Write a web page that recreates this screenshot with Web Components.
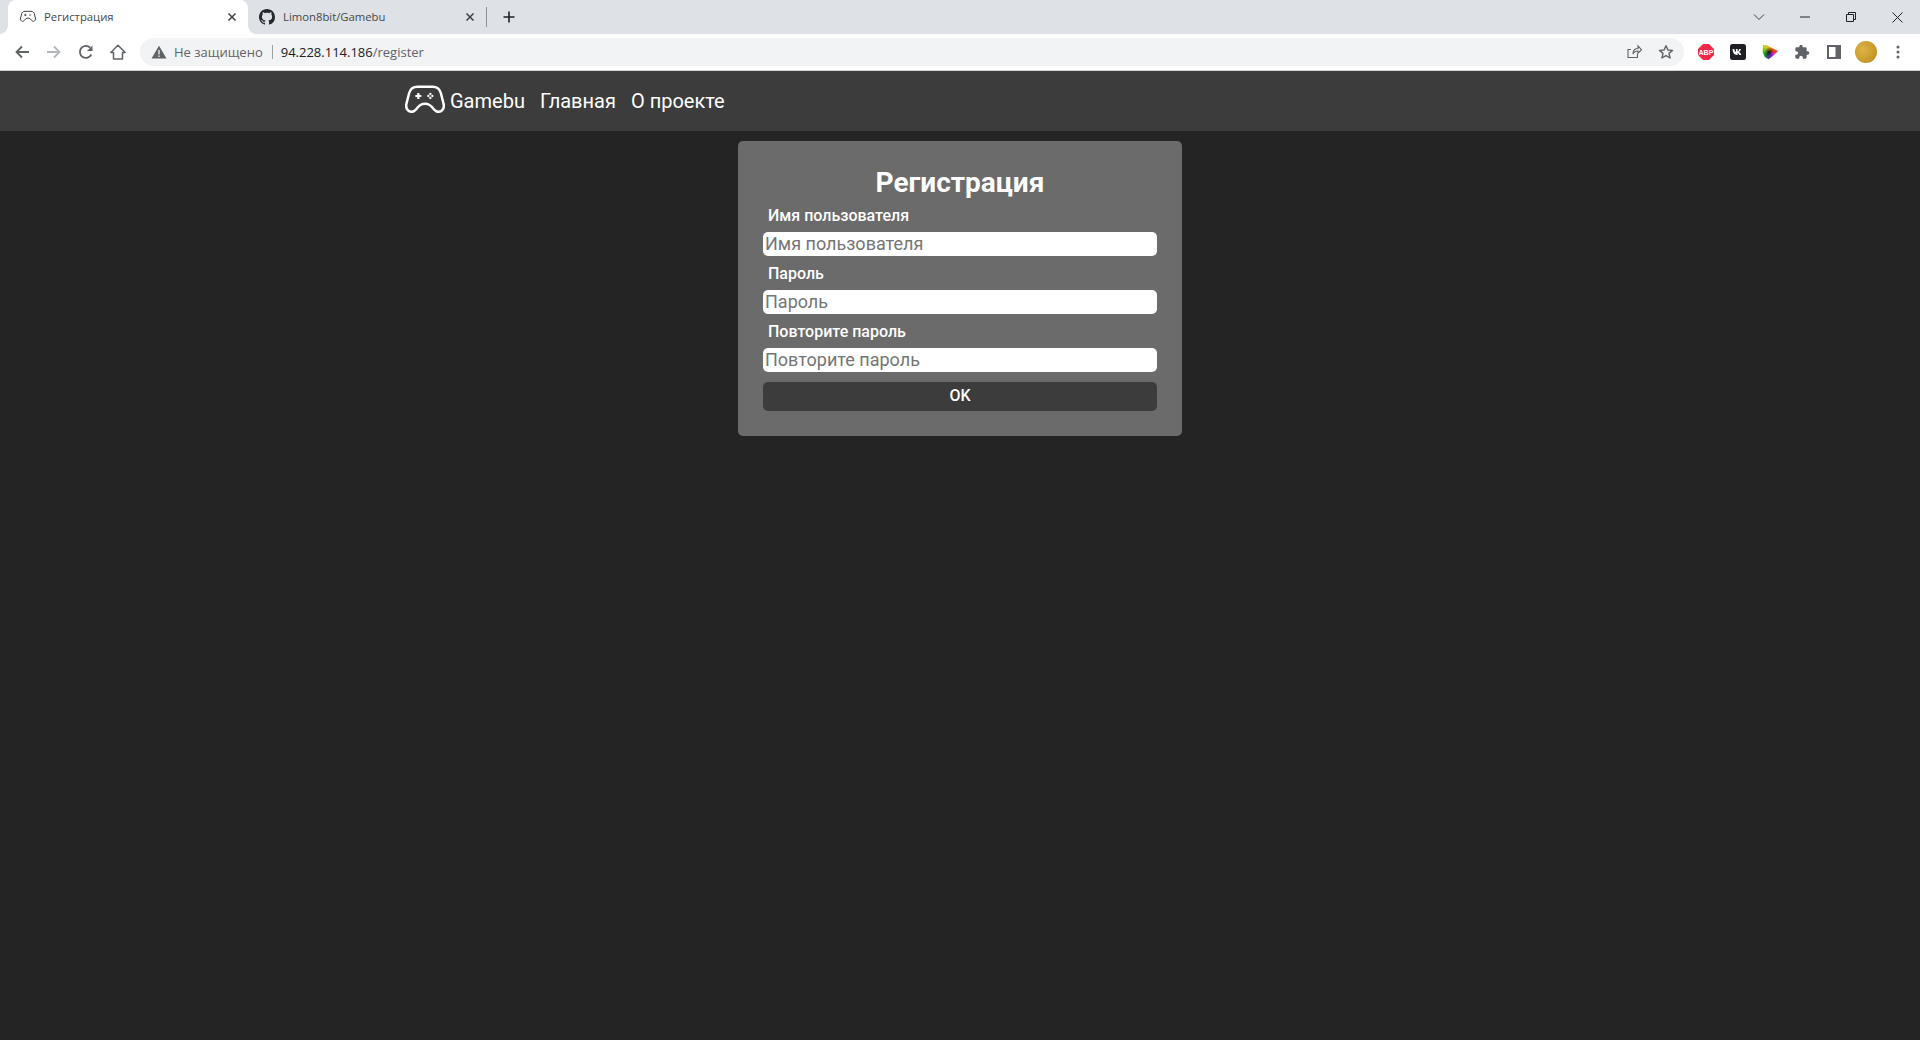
<!DOCTYPE html>
<html lang="ru">
<head>
<meta charset="utf-8">
<title>Регистрация</title>
<style>
    html, body { margin: 0; height: 100%; background: #242424; }
    body { display: flex; flex-direction: column; height: 1040px; overflow: hidden; font-family: Roboto, "Liberation Sans", sans-serif; }
</style>
</head>
<body>
<browser-bar></browser-bar>
<site-nav>
    <a href="#">Главная</a>
    <a href="#">О проекте</a>
</site-nav>
<register-page>
    <form-field label="Имя пользователя"></form-field>
    <form-field label="Пароль" type="password"></form-field>
    <form-field label="Повторите пароль" type="password"></form-field>
</register-page>

<script>
const GAMEPAD = `<path d="M7.500 3.500h9c2.600 0 4.300 1.300 5 3.700l1.600 6.300c.7 2.800-.8 5-2.900 5-1.400 0-2.300-.8-3.200-1.900C15.800 14.800 14.200 13.600 12 13.600S8.200 14.800 7 16.600c-.9 1.100-1.800 1.900-3.200 1.900-2.100 0-3.600-2.200-2.900-5l1.600-6.300c.7-2.400 2.400-3.700 5-3.700z" fill="none" stroke="currentColor" stroke-width="1.500" stroke-linejoin="round"/>
    <path d="M8 7.200v3.600M6.200 9h3.600" fill="none" stroke="currentColor" stroke-width="1.300"/>
    <circle cx="15.200" cy="7.800" r=".7" fill="currentColor"/><circle cx="15.200" cy="10.200" r=".7" fill="currentColor"/>
    <circle cx="14" cy="9" r=".7" fill="currentColor"/><circle cx="16.400" cy="9" r=".7" fill="currentColor"/>`;

class BrowserBar extends HTMLElement {
    constructor() {
        super();
        this.root = this.attachShadow({ mode: "open" });
        this.root.innerHTML = `
            <style>
                :host { display: block; font-family: "Open Sans", "Noto Sans", sans-serif; color: #3c4043; }
                .tabs { height: 34px; background: #dee1e6; display: flex; align-items: flex-end; padding-left: 8px; }
                .tab { width: 240px; height: 34px; box-sizing: border-box; display: flex; align-items: center; padding: 0 8px 0 12px; gap: 8px; font-size: 11.300px; white-space: nowrap; color: #45494c; }
                .tab.active { background: white; border-radius: 8px 8px 0 0; position: relative; }
                .tab.active::before, .tab.active::after { content: ""; position: absolute; bottom: 0; width: 8px; height: 8px; }
                .tab.active::before { left: -8px; background: radial-gradient(circle at 0 0, #dee1e6 7.500px, white 8px); }
                .tab.active::after { right: -8px; background: radial-gradient(circle at 100% 0, #dee1e6 7.500px, white 8px); }
                .tab.other { width: 238px; padding-left: 11px; gap: 8px; }
                .tab .name { flex: 1; padding-bottom: 1px; }
                .tab svg { flex: none; }
                .sep { width: 1px; height: 20px; background: #8f9296; margin: 0 0 7px 0; }
                .plus { width: 44px; height: 34px; display: flex; align-items: center; justify-content: center; }
                .spacer { flex: 1; }
                .win { height: 34px; width: 46px; display: flex; align-items: center; justify-content: center; margin-top: -5px; }
                .winctl { display: flex; align-self: flex-start; padding-top: 5px; }
                .tools { height: 37px; box-sizing: border-box; border-bottom: 1px solid #cfd1d4; background: white; display: flex; align-items: center; padding: 0 6px; }
                .btn { width: 32px; height: 36px; display: flex; align-items: center; justify-content: center; flex: none; }
                .omni { flex: 1; height: 28px; margin: 0 6px; background: #f1f3f4; border-radius: 14px; display: flex; align-items: center; padding: 0 2px 0 11px; font-size: 13px; white-space: nowrap; }
                .warn { color: #5f6368; margin: 0 0 0 7px; }
                .bar { width: 1px; height: 14px; background: #9aa0a6; margin: 0 8px 0 9px; }
                .host { color: #202124; }
                .path { color: #5f6368; }
                .omni .grow { flex: 1; }
                .omni .act { width: 32px; display: flex; justify-content: center; }
                .avatar { width: 22px; height: 22px; border-radius: 50%; background: radial-gradient(circle at 35% 40%, #dcb445, #cb9c2e 55%, #b98a22 90%); }
                .wheel { width: 16px; height: 16px; clip-path: polygon(6% 6%, 30% 8%, 100% 44%, 72% 72%, 40% 96%, 18% 82%, 4% 50%); background: radial-gradient(circle at 45% 48%, rgba(20,0,0,.85), rgba(20,0,0,0) 38%), conic-gradient(at 45% 48%, #f0b020, #f03a10 25%, #e030e0 32%, #6a20d0 45%, #0c7a2c 62%, #60c820 78%, #c8d020 90%, #f0b020); }
            </style>
            <div class="tabs">
                <div class="tab active">
                    <svg width="16" height="16" viewBox="0 0 24 24" style="color:#3c4043">${GAMEPAD}</svg>
                    <span class="name">Регистрация</span>
                    <svg width="16" height="16" viewBox="0 0 16 16"><path d="M4.500 4.500l7 7M11.500 4.500l-7 7" stroke="#3c4043" stroke-width="1.500"/></svg>
                </div>
                <div class="tab other">
                    <svg width="16" height="16" viewBox="0 0 16 16"><path fill="#24292e" d="M8 0C3.580 0 0 3.580 0 8c0 3.540 2.290 6.530 5.470 7.590.4.070.55-.17.55-.38 0-.19-.010-.82-.010-1.490-2.010.370-2.530-.490-2.690-.940-.090-.230-.480-.940-.820-1.130-.280-.150-.680-.520-.010-.530.630-.010 1.080.580 1.230.820.720 1.210 1.870.870 2.330.660.070-.520.280-.870.510-1.070-1.780-.200-3.640-.890-3.640-3.950 0-.870.310-1.590.820-2.150-.080-.200-.360-1.020.080-2.120 0 0 .670-.210 2.200.820.640-.180 1.320-.270 2-.270s1.360.090 2 .270c1.530-1.040 2.200-.820 2.200-.820.440 1.100.160 1.920.080 2.120.510.560.820 1.270.820 2.150 0 3.070-1.870 3.750-3.650 3.950.290.250.540.730.540 1.480 0 1.070-.010 1.930-.010 2.200 0 .210.150.460.550.380A8.010 8.010 0 0 0 16 8c0-4.420-3.580-8-8-8z"/></svg>
                    <span class="name">Limon8bit/Gamebu</span>
                    <svg width="16" height="16" viewBox="0 0 16 16"><path d="M4.500 4.500l7 7M11.500 4.500l-7 7" stroke="#3c4043" stroke-width="1.500"/></svg>
                </div>
                <div class="sep"></div>
                <div class="plus"><svg width="14" height="14" viewBox="0 0 14 14"><path d="M7 1.500v11M1.500 7h11" stroke="#202124" stroke-width="1.600"/></svg></div>
                <div class="spacer"></div>
                <div class="winctl">
                    <div class="win"><svg width="12" height="8" viewBox="0 0 12 8"><path d="M1 1.500l5 5 5-5" fill="none" stroke="#3c4043" stroke-width="1"/></svg></div>
                    <div class="win"><svg width="10" height="10" viewBox="0 0 10 10"><path d="M0 5h10" stroke="#202124" stroke-width="1"/></svg></div>
                    <div class="win"><svg width="10" height="10" viewBox="0 0 10 10"><path d="M.5 2.500h7v7h-7zM2.500 2.500v-2h7v7h-2" fill="none" stroke="#202124" stroke-width="1"/></svg></div>
                    <div class="win"><svg width="11" height="11" viewBox="0 0 11 11"><path d="M.5.500l10 10M10.500.500l-10 10" stroke="#202124" stroke-width="1"/></svg></div>
                </div>
            </div>
            <div class="tools">
                <div class="btn"><svg width="16" height="16" viewBox="0 0 16 16"><path d="M15 8H2.500M8 2.500L2.500 8 8 13.500" fill="none" stroke="#5f6368" stroke-width="1.800"/></svg></div>
                <div class="btn"><svg width="16" height="16" viewBox="0 0 16 16"><path d="M1 8h12.500M8 2.500L13.500 8 8 13.500" fill="none" stroke="#b5b8bb" stroke-width="1.800"/></svg></div>
                <div class="btn"><svg width="16" height="16" viewBox="0 0 16 16"><path d="M13.300 10.500A6 6 0 1 1 12.200 3.700" fill="none" stroke="#5f6368" stroke-width="1.800"/><path d="M14.500 1.500v5.500H9z" fill="#5f6368"/></svg></div>
                <div class="btn"><svg width="18" height="18" viewBox="0 0 18 18"><path d="M9 2.200L1.800 9.500h2.700V16h9V9.500h2.700z" fill="none" stroke="#5f6368" stroke-width="1.500" stroke-linejoin="round"/></svg></div>
                <div class="omni">
                    <svg width="16" height="14" viewBox="0 0 16 14"><path d="M8 .8L15.500 13.500H.5z" fill="#5f6368"/><path d="M8 5v4.500M8 10.500v1.500" stroke="#f1f3f4" stroke-width="1.300"/></svg>
                    <span class="warn">Не защищено</span>
                    <span class="bar"></span>
                    <span><span class="host">94.228.114.186</span><span class="path">/register</span></span>
                    <span class="grow"></span>
                    <span class="act"><svg width="16" height="16" viewBox="0 0 16 16"><path d="M11.500 9.500v4h-9.500v-8h3M7 10c0-4 2-5.500 5-5.500V2l3.500 3.700L12 9.200V7c-2 0-4 .5-5 3z" fill="none" stroke="#5f6368" stroke-width="1.100"/></svg></span>
                    <span class="act"><svg width="16" height="16" viewBox="0 0 16 16"><path d="M8 1.700l1.900 4.300 4.600.4-3.500 3 1.100 4.600L8 11.600 3.900 14l1.100-4.600-3.500-3 4.600-.4z" fill="none" stroke="#5f6368" stroke-width="1.400" stroke-linejoin="round"/></svg></span>
                </div>
                <div class="btn"><svg width="16" height="16" viewBox="0 0 16 16"><path d="M5 0h6l5 5v6l-5 5H5l-5-5V5z" fill="#f0284a"/><text x="8" y="10.700" text-anchor="middle" font-family="Liberation Sans, sans-serif" font-size="7.200" font-weight="700" fill="white">ABP</text></svg></div>
                <div class="btn"><svg width="16" height="16" viewBox="0 0 16 16"><rect width="16" height="16" rx="2.500" fill="#1f2023"/><path d="M2.500 5h1.800c.3 1.700 1 2.800 1.600 3V5h1.700v2.500c.6-.1 1.300-1 1.600-2.500h1.700c-.3 1.500-1.200 2.600-1.900 3 .7.300 1.800 1.200 2.300 3h-1.900c-.4-1.200-1.200-2-1.800-2.100V11H7c-2.800 0-4.300-2.200-4.500-6z" fill="white"/></svg></div>
                <div class="btn"><div class="wheel"></div></div>
                <div class="btn"><svg width="16" height="16" viewBox="0 0 24 24"><path fill="#5f6368" d="M20.500 11H19V7c0-1.100-.9-2-2-2h-4V3.500a2.500 2.500 0 0 0-5 0V5H4c-1.100 0-2 .9-2 2v3.800h1.500a2.700 2.700 0 0 1 0 5.400H2V20c0 1.100.9 2 2 2h3.800v-1.500a2.700 2.700 0 0 1 5.400 0V22H17c1.100 0 2-.9 2-2v-4h1.500a2.500 2.500 0 0 0 0-5z"/></svg></div>
                <div class="btn"><svg width="14" height="14" viewBox="0 0 14 14"><path d="M0 0h14v14H0zM2 2v10h6.500V2z" fill="#5f6368" fill-rule="evenodd"/></svg></div>
                <div class="btn"><div class="avatar"></div></div>
                <div class="btn"><svg width="4" height="14" viewBox="0 0 4 14"><circle cx="2" cy="2" r="1.500" fill="#5f6368"/><circle cx="2" cy="7" r="1.500" fill="#5f6368"/><circle cx="2" cy="12" r="1.500" fill="#5f6368"/></svg></div>
            </div>
        `;
    }
}

class SiteNav extends HTMLElement {
    constructor() {
        super();
        this.root = this.attachShadow({ mode: "open" });
        this.root.innerHTML = `
            <style>
                :host { display: flex; align-items: center; height: 60px; background: #3c3c3c; padding-left: 405px; color: white; font-size: 20px; gap: 15px; }
                .brand { display: flex; align-items: center; gap: 5px; }
                svg { width: 40px; height: 40px; }
                ::slotted(a) { color: white; text-decoration: none; }
            </style>
            <div class="brand">
                <svg viewBox="0 0 24 24">${GAMEPAD}</svg>
                <span>Gamebu</span>
            </div>
            <slot></slot>
        `;
    }
}

class FormField extends HTMLElement {
    constructor() {
        super();
        this.root = this.attachShadow({ mode: "open" });
        this.root.innerHTML = `
            <style>
                :host { display: block; }
                label { display: block; color: white; font: 500 16px/18px Roboto, sans-serif; padding-left: 5px; margin-bottom: 7px; }
                input { display: block; width: 100%; box-sizing: border-box; height: 24px; border: 0; border-radius: 5px; padding: 0 2px 2px; background: white; font: 18px Roboto, sans-serif; outline: none; }
                input::placeholder { color: #757575; opacity: 1; }
            </style>
            <label></label>
            <input>
        `;
        const text = this.getAttribute("label");
        this.root.querySelector("label").textContent = text;
        const input = this.root.querySelector("input");
        input.placeholder = text;
        input.type = this.getAttribute("type") || "text";
    }
}

class RegisterPage extends HTMLElement {
    constructor() {
        super();
        this.root = this.attachShadow({ mode: "open" });
        this.root.innerHTML = `
            <style>
                :host { display: flex; justify-content: center; padding-top: 10px; flex: 1; }
                .card { width: 444px; height: 295px; box-sizing: border-box; background: #6b6b6b; border-radius: 5px; padding: 25px 25px 25px; display: flex; flex-direction: column; }
                h1 { margin: 0 0 7px; color: white; font: 700 28px/34px Roboto, sans-serif; text-align: center; }
                .fields { display: flex; flex-direction: column; gap: 9px; }
                button { margin-top: 10px; height: 29px; border: 0; border-radius: 5px; background: #3c3c3c; color: white; font: 500 16px Roboto, sans-serif; padding: 0 0 2px; }
            </style>
            <div class="card">
                <h1>Регистрация</h1>
                <div class="fields"><slot></slot></div>
                <button>OK</button>
            </div>
        `;
    }
}

customElements.define("browser-bar", BrowserBar);
customElements.define("site-nav", SiteNav);
customElements.define("form-field", FormField);
customElements.define("register-page", RegisterPage);
</script>
</body>
</html>
